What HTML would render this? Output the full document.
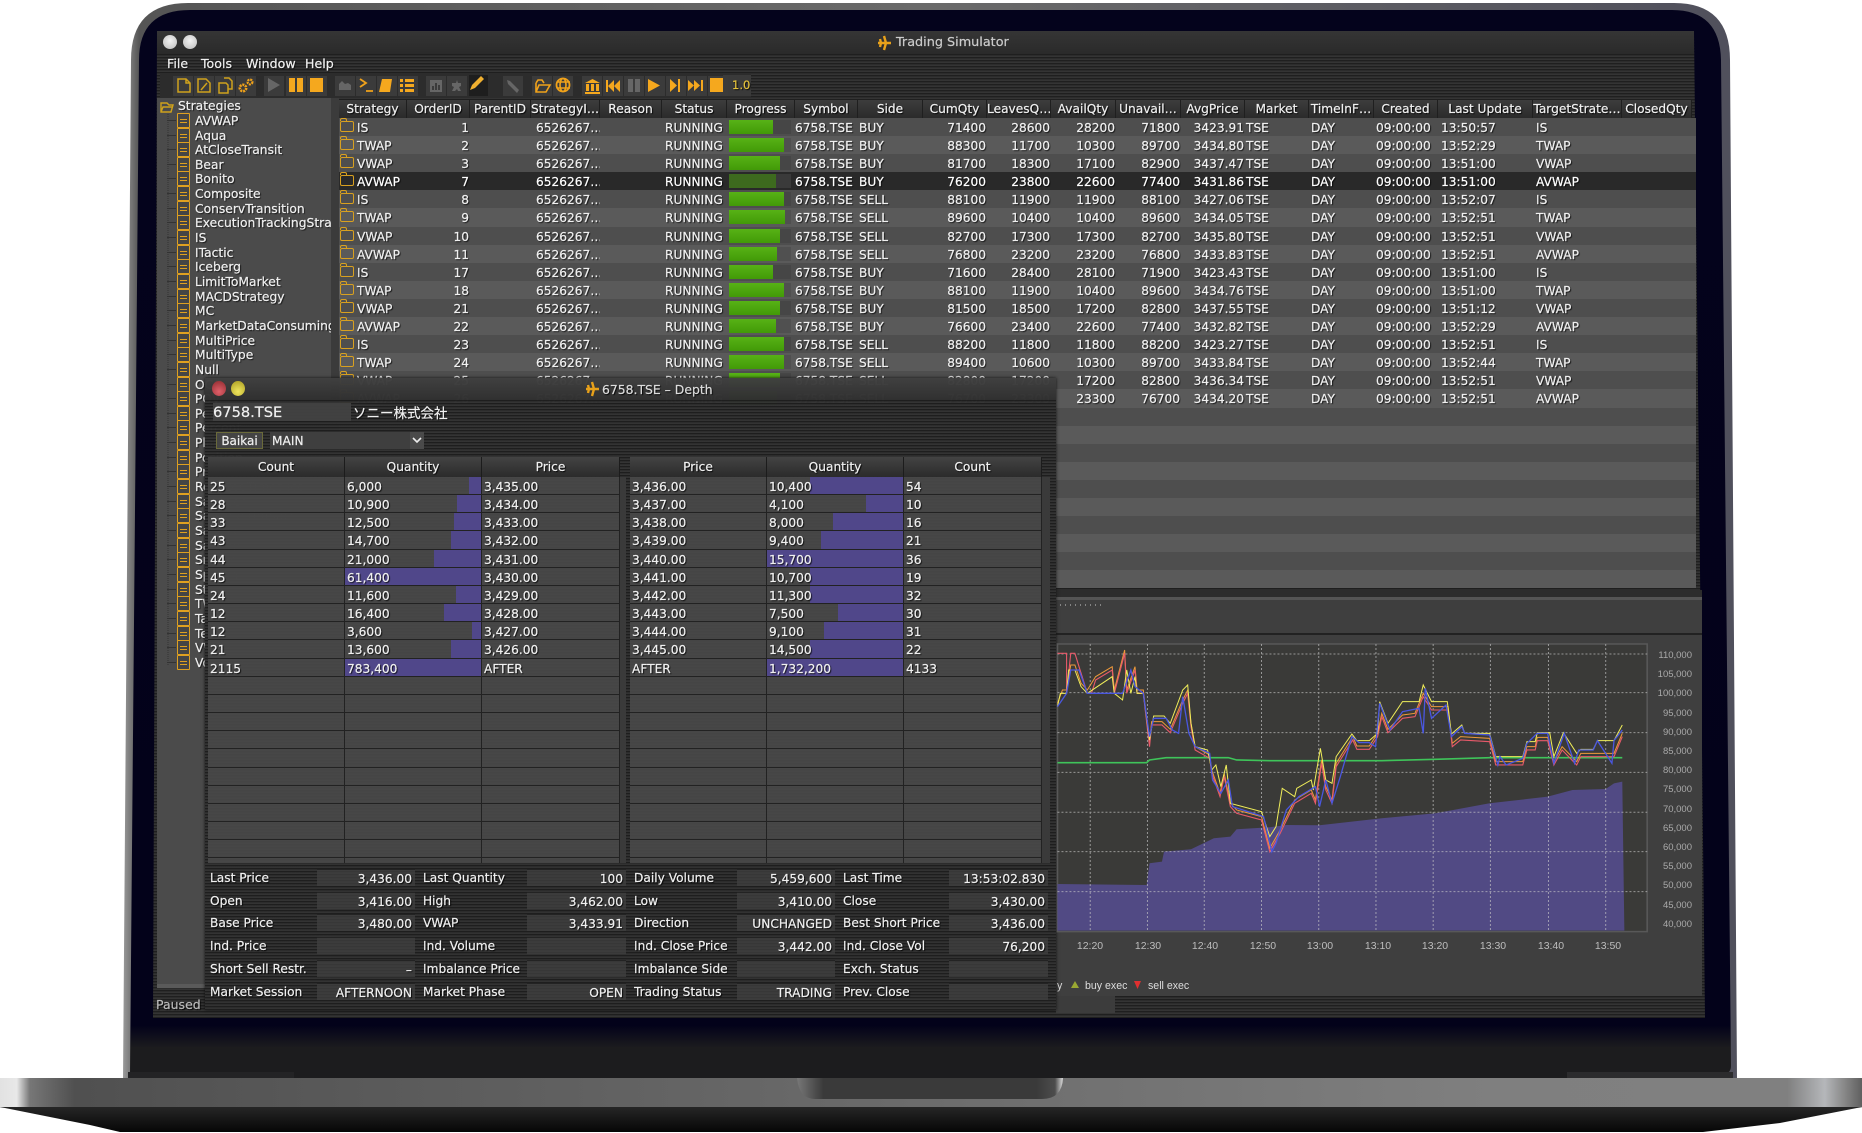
<!DOCTYPE html>
<html lang="en"><head><meta charset="utf-8"><title>Trading Simulator</title>
<style>
html,body{margin:0;padding:0;background:#fff}
body{width:1862px;height:1133px;position:relative;overflow:hidden;font-family:"DejaVu Sans","Noto Sans CJK JP",sans-serif;font-size:12.2px;color:#f0f0f0;-webkit-text-stroke:.2px}
.a{position:absolute}
svg{position:absolute;left:0;top:0}
#scr{position:absolute;left:0;top:0;width:1862px;height:1133px;filter:blur(.35px)}
#bg{position:absolute;left:0;top:0;width:1862px;height:1133px;clip-path:polygon(157px 31px,1694px 31px,1705px 1018px,153px 1018px);background:repeating-linear-gradient(#1f1f1f 0 1px,#2c2c2c 1px 2px,#343434 2px 3px)}
.ts{text-shadow:1px 1px 1px rgba(0,0,0,.75)}
#tree{left:157px;top:98px;width:174px;height:890px;background:#4b4b4b;overflow:hidden;border-bottom:4px solid #5a5a5a;box-sizing:border-box}
#tree div{position:absolute;left:38px;height:15px;line-height:17px;white-space:nowrap;text-shadow:1px 1px 1px rgba(0,0,0,.75);font-size:12.3px}
#tree i{position:absolute;left:-18px;top:0;width:11px;height:13px;border:1.6px solid #dfa020;border-radius:1px;background:linear-gradient(#dfa020,#dfa020) 2px 5px/7px 1px no-repeat,linear-gradient(#dfa020,#dfa020) 2px 8px/7px 1px no-repeat,#454545}
#tree u{position:absolute;left:-28px;top:7px;width:9px;height:1px;background:#333}
#hd{left:339px;top:100px;width:1353px;height:18px;display:grid;grid-template-columns:68px 63px 61px 69px 62px 65px 68px 63px 65px 64px 64px 65px 65px 64px 64px 65px 64px 95px 89px 70px;background:linear-gradient(#3c3c3c,#2a2a2a);overflow:hidden}
#hd span{text-align:center;line-height:18px;white-space:nowrap;overflow:hidden;border-right:1px solid #1f1f1f;box-sizing:border-box;font-size:12.2px;text-shadow:1px 1px 1px #000}
#rows{left:339px;top:118px;width:1357px;height:472px;overflow:hidden}
.r{height:18.1px;line-height:20px;display:grid;grid-template-columns:68px 63px 61px 69px 62px 65px 68px 63px 65px 64px 64px 65px 65px 64px 64px 65px 64px 95px 89px 70px;background:#4e4e4e;text-shadow:1px 1px 1px rgba(0,0,0,.8);position:relative}
.r:nth-child(even){background:#5a5a5a}
.r.s{background:#292929;color:#fff}
.r span{white-space:nowrap;overflow:hidden;position:relative}
.r span:nth-child(1){padding-left:18px}
.r span:nth-child(2),.r span:nth-child(10),.r span:nth-child(11),.r span:nth-child(12),.r span:nth-child(13),.r span:nth-child(14){text-align:right;padding-right:1px}
.r span:nth-child(4){padding-left:5px}
.r span:nth-child(6){padding-left:3px}
.r span:nth-child(9){padding-left:1px}
.r span:nth-child(15){padding-left:1px}
.r span:nth-child(16),.r span:nth-child(17){padding-left:2px}
.r span:nth-child(18),.r span:nth-child(19){padding-left:3px}
.r b{position:absolute;left:1px;top:3px;width:12px;height:9px;border:1.4px solid #d8a020;border-radius:2px}
.r b:before{content:"";position:absolute;left:-1px;top:-4px;width:5px;height:2px;border:1.4px solid #d8a020;border-bottom:0;border-radius:2px 2px 0 0}
.r u{position:absolute;left:2px;top:2px;height:14px;background:linear-gradient(#57b216,#429a08);display:block}
.r.s u{background:#3d6a1e}
.r em{position:absolute;left:2px;top:2px;width:62px;height:14px;background:rgba(0,0,0,.1);display:block}
#chartp{left:1056px;top:610px;width:646px;height:386px;background:#3f3f3f}
#split{left:1056px;top:590px;width:646px;height:20px;background:linear-gradient(#2d2d2d 0 7px,#555 7px 10px,#3e3e3e 10px)}
#xl span{position:absolute;top:940px;font:10.5px "Liberation Sans",sans-serif;color:#bdbdbd;width:40px;text-align:center;-webkit-text-stroke:0}
#yl span{position:absolute;left:1652px;font:9.5px "Liberation Sans",sans-serif;color:#aaa;width:40px;text-align:right;-webkit-text-stroke:0}
.leg{position:absolute;top:980px;font:10.6px "Liberation Sans",sans-serif;color:#ddd;white-space:nowrap;-webkit-text-stroke:0}
#win{left:205px;top:378px;width:851px;height:632px;background:rgba(44,44,44,.9);box-shadow:0 0 3px #111}
#win .tb{position:absolute;left:0;top:0;width:851px;height:22px;background:linear-gradient(rgba(70,70,70,.75),rgba(48,48,48,.85))}
#win .st{position:absolute;left:0;top:22px;width:851px;height:610px;background:repeating-linear-gradient(rgba(28,28,28,.9) 0 1px,rgba(44,44,44,.82) 1px 2px,rgba(52,52,52,.82) 2px 3px)}
.dh{position:absolute;top:79px;height:20px;width:412px;display:grid;grid-template-columns:137px 137px 138px;background:linear-gradient(#434343,#2b2b2b)}
.dh span{text-align:center;line-height:21px;border-right:1px solid #1c1c1c;box-sizing:border-box;text-shadow:1px 1px 1px #000}
.dt{position:absolute;top:99px;width:412px;height:386px;overflow:hidden}
.d{height:18.17px;box-sizing:border-box;border-bottom:1.4px solid #222;display:grid;grid-template-columns:137px 137px 138px;line-height:20px;background:rgba(72,72,72,.94);text-shadow:1px 1px 1px rgba(0,0,0,.85)}
.d span{position:relative;padding-left:2px;border-right:1.4px solid #222;box-sizing:border-box;white-space:nowrap;overflow:hidden}
.d u{position:absolute;right:0;top:0;bottom:0;background:#50478a;z-index:0;display:block}
.d s{position:relative;z-index:1;text-decoration:none}
.ir{position:absolute;left:5px;height:17px;line-height:19px;width:843px;display:grid;grid-template-columns:107px 98px 8px 104px 99px 8px 103px 98px 8px 106px 99px;text-shadow:1px 1px 1px #000}
.ir span{white-space:nowrap;overflow:hidden}
.ir span.v{background:rgba(64,64,64,.75);text-align:right;padding-right:3px;box-sizing:border-box;border-top:1px solid #232323}
</style></head><body>

<svg width="1862" height="1133" viewBox="0 0 1862 1133">
<defs>
<linearGradient id="edge" x1="0" x2="1"><stop offset="0" stop-color="#9a9a9a"/><stop offset=".01" stop-color="#555"/><stop offset=".5" stop-color="#6a6a6a"/><stop offset="1" stop-color="#50505c"/></linearGradient>
<linearGradient id="bez" gradientUnits="userSpaceOnUse" x1="0" y1="0" x2="0" y2="1133"><stop offset="0" stop-color="#04031c"/><stop offset=".905" stop-color="#03021a"/><stop offset=".925" stop-color="#1c1c1e"/><stop offset="1" stop-color="#1c1c1e"/></linearGradient>
<linearGradient id="base" x1="0" x2="1"><stop offset="0" stop-color="#e2e2e2"/><stop offset=".009" stop-color="#e8e8e8"/><stop offset=".016" stop-color="#777"/><stop offset=".04" stop-color="#505050"/><stop offset=".4" stop-color="#666"/><stop offset=".8" stop-color="#7f7f7f"/><stop offset=".96" stop-color="#808080"/><stop offset=".98" stop-color="#b5b7ba"/><stop offset=".99" stop-color="#8a8a8a"/><stop offset="1" stop-color="#5f5f5f"/></linearGradient>
<linearGradient id="bot" x1="0" x2="0" y1="0" y2="1"><stop offset="0" stop-color="#262626"/><stop offset="1" stop-color="#060606"/></linearGradient>
<linearGradient id="nt" x1="0" x2="1"><stop offset="0" stop-color="#777"/><stop offset=".1" stop-color="#3a3a3a"/><stop offset=".9" stop-color="#3a3a3a"/><stop offset=".97" stop-color="#4c4c4c"/><stop offset="1" stop-color="#ddd"/></linearGradient>
</defs>
<path d="M123 1080 L131 60 Q131 3 188 3 H1674 Q1730 3 1730 60 L1737 1080Z" fill="url(#edge)"/>
<path d="M130 1074 L139 60 Q139 10 190 10 H1672 Q1720 10 1721 60 L1731 1066 Q1731 1074 1722 1074Z" fill="url(#bez)"/>
<rect x="128" y="1072" width="166" height="7" fill="#232325"/>
<rect x="1567" y="1072" width="166" height="7" fill="#2b2b2d"/>
<rect x="294" y="1066" width="1273" height="13" fill="#1c1c1e"/>
<rect x="0" y="1078" width="1862" height="29" fill="url(#base)"/>
<rect x="0" y="1107" width="1862" height="1" fill="#9a9a9a" opacity=".35"/>
<path d="M0 1107 H1862 L1780 1123 L1703 1132 H120 L90 1125Z" fill="url(#bot)"/>
<path d="M797 1078 H1063 Q1062 1099 1042 1099 H815 Q799 1099 797 1078Z" fill="url(#nt)"/>
</svg>

<div id="scr">
<div id="bg"></div>
<div class="a" style="left:157px;top:31px;width:1537px;height:23px;background:linear-gradient(#353535,#2a2a2a)"></div>
<div class="a" style="left:163px;top:35px;width:14px;height:14px;border-radius:50%;background:radial-gradient(circle at 50% 40%,#f2f2f2,#bbb)"></div>
<div class="a" style="left:183px;top:35px;width:14px;height:14px;border-radius:50%;background:radial-gradient(circle at 50% 40%,#f2f2f2,#bbb)"></div>
<div class="a" style="left:896px;top:35px;font-size:12.8px;color:#ccc;white-space:nowrap" >Trading Simulator</div>
<svg width="1862" height="1133" style="z-index:1"><path d="M878 43h13M884 36l2 7-2 7M880 39l1 4-1 4" stroke="#e8a11a" stroke-width="2.4" fill="none"/></svg>
<div class="a ts" style="left:167px;top:56px;font-size:12.6px;white-space:nowrap">File</div>
<div class="a ts" style="left:201px;top:56px;font-size:12.6px;white-space:nowrap">Tools</div>
<div class="a ts" style="left:246px;top:56px;font-size:12.6px;white-space:nowrap">Window</div>
<div class="a ts" style="left:305px;top:56px;font-size:12.6px;white-space:nowrap">Help</div>
<div class="a" style="left:160px;top:74px;width:591px;height:23px;background:#2c2c2c"></div>
<div class="a" style="left:723px;top:75px;width:28px;height:21px;background:#3a3a3a"></div>
<div class="a" style="left:732px;top:78px;font-size:11.5px;color:#e4c23c;text-shadow:1px 1px 1px #000">1.0</div>

<svg width="1862" height="1133" style="z-index:1">
<g fill="#3b3b3b">
<rect x="173" y="76" width="20" height="20"/><rect x="194" y="76" width="20" height="20"/><rect x="215" y="76" width="20" height="20"/><rect x="236" y="76" width="20" height="20"/>
<rect x="264" y="76" width="20" height="20"/><rect x="286" y="76" width="20" height="20"/><rect x="307" y="76" width="20" height="20"/>
<rect x="335" y="76" width="20" height="20"/><rect x="356" y="76" width="20" height="20"/><rect x="377" y="76" width="20" height="20"/><rect x="398" y="76" width="20" height="20"/>
<rect x="426" y="76" width="20" height="20"/><rect x="447" y="76" width="20" height="20"/>
<rect x="469" y="75" width="19" height="21" fill="#1e1e1e"/>
<rect x="503" y="76" width="20" height="20"/>
<rect x="532" y="76" width="20" height="20"/><rect x="553" y="76" width="20" height="20"/>
<rect x="582" y="76" width="20" height="20"/><rect x="603" y="76" width="20" height="20"/><rect x="624" y="76" width="20" height="20"/><rect x="645" y="76" width="20" height="20"/><rect x="666" y="76" width="20" height="20"/><rect x="687" y="76" width="20" height="20"/><rect x="708" y="76" width="20" height="20"/>
</g>
<g fill="none" stroke="#cfa21c" stroke-width="1.5">
<path d="M178 79h8l4 4v9h-12zM186 79v4h4"/>
<path d="M198 79h8l4 4v9h-12zM201 90l6-7"/>
<path d="M224 78h5l3 3v8h-4M219 83h7l2 2v8h-9z"/>
</g>
<g fill="none" stroke="#f0a21a" stroke-width="1.6">
<circle cx="243" cy="88" r="3.2" stroke-dasharray="2 .8" stroke-width="2.6"/><circle cx="250" cy="82" r="2.4" stroke-dasharray="2 .8" stroke-width="2.2"/>
<path d="M360 79l6 4-6 4M366 91h7" stroke-width="1.8"/>
<path d="M536 83v9h10l4-7h-11l-3 7M536 83l2-3h4l2 3"/>
<circle cx="563" cy="85" r="6.5" stroke-width="1.8"/><ellipse cx="563" cy="85" rx="3" ry="6.5"/><path d="M557 82h13M557 88h13"/>
</g>
<g fill="#f5a81e">
<rect x="289" y="78" width="6" height="14"/><rect x="297" y="78" width="6" height="14"/>
<rect x="310" y="78" width="13" height="14"/>
<path d="M382 79h10l-2 13h-11zM384 82h6v1h-6z"/>
<rect x="400" y="79" width="3" height="3"/><rect x="400" y="84" width="3" height="3"/><rect x="400" y="89" width="3" height="3"/><rect x="405" y="79" width="9" height="3"/><rect x="405" y="84" width="9" height="3"/><rect x="405" y="89" width="9" height="3"/>
<path d="M470 90l2-5 9-9 3 3-9 9z" fill="#f0b030"/>
<path d="M585 83l7.500-4 7.500 4zM586 84h3v7h-3zM591 84h3v7h-3zM596 84h3v7h-3zM585 92h15v2h-15z"/>
<path d="M606 80h2v12h-2zM614 80v12l-6-6zM620 80v12l-6-6z"/>
<path d="M648 79l12 6.500-12 6.500z"/>
<path d="M670 79l7 6.500-7 6.500zM678 79h2v13h-2z"/>
<path d="M688 80l6 5.500-6 5.500zM694 80l6 5.500-6 5.500zM701 80h2v11h-2z"/>
<rect x="710" y="78" width="13" height="14"/>
</g>
<g fill="#666">
<path d="M268 78l12 7-12 7z"/>
<path d="M339 90v-6l3-3 3 3 3-1 3 2v5z"/>
<path d="M430 80h12v12h-12zM432 90h2v-4h-2zM435 90h2v-7h-2zM438 90h2v-5h-2z" fill-rule="evenodd"/>
<path d="M452 83h4l1-3 1 3h3v3l-2 1 2 4h-3l-1-2-2 2h-3l2-4-2-1z"/>
<path d="M507 80l3 1 9 9-2 3-9-9zM512 79l4 4"/>
<rect x="628" y="79" width="5" height="13"/><rect x="635" y="79" width="5" height="13"/>
</g>
</svg>

<div id="tree" class="a">
<svg width="174" height="890" style="left:0;top:0"><path d="M11 14V568" stroke="#333" stroke-dasharray="1 1" fill="none"/><path d="M4 5h6l2 2h4l-2 7H4z M4 14l2-5h10" stroke="#cfa21c" stroke-width="1.4" fill="none"/></svg>
<div style="left:21px;top:0">Strategies</div>
<div style="top:15px"><u></u><i></i>AVWAP</div>
<div style="top:30px"><u></u><i></i>Aqua</div>
<div style="top:44px"><u></u><i></i>AtCloseTransit</div>
<div style="top:59px"><u></u><i></i>Bear</div>
<div style="top:73px"><u></u><i></i>Bonito</div>
<div style="top:88px"><u></u><i></i>Composite</div>
<div style="top:103px"><u></u><i></i>ConservTransition</div>
<div style="top:117px"><u></u><i></i>ExecutionTrackingStrategy</div>
<div style="top:132px"><u></u><i></i>IS</div>
<div style="top:147px"><u></u><i></i>ITactic</div>
<div style="top:161px"><u></u><i></i>Iceberg</div>
<div style="top:176px"><u></u><i></i>LimitToMarket</div>
<div style="top:191px"><u></u><i></i>MACDStrategy</div>
<div style="top:205px"><u></u><i></i>MC</div>
<div style="top:220px"><u></u><i></i>MarketDataConsuming</div>
<div style="top:235px"><u></u><i></i>MultiPrice</div>
<div style="top:249px"><u></u><i></i>MultiType</div>
<div style="top:264px"><u></u><i></i>Null</div>
<div style="top:279px"><u></u><i></i>OCO</div>
<div style="top:293px"><u></u><i></i>POV</div>
<div style="top:308px"><u></u><i></i>Pegged</div>
<div style="top:322px"><u></u><i></i>Percent</div>
<div style="top:337px"><u></u><i></i>Plan</div>
<div style="top:352px"><u></u><i></i>Position</div>
<div style="top:366px"><u></u><i></i>PriceTransition</div>
<div style="top:381px"><u></u><i></i>RealizedTimeslice</div>
<div style="top:396px"><u></u><i></i>SaOrder</div>
<div style="top:410px"><u></u><i></i>SaMarketImpact</div>
<div style="top:425px"><u></u><i></i>Sample</div>
<div style="top:440px"><u></u><i></i>Savings</div>
<div style="top:454px"><u></u><i></i>Sniper</div>
<div style="top:469px"><u></u><i></i>Spread</div>
<div style="top:484px"><u></u><i></i>Stop</div>
<div style="top:498px"><u></u><i></i>TWAP</div>
<div style="top:513px"><u></u><i></i>Tactic</div>
<div style="top:528px"><u></u><i></i>Test</div>
<div style="top:542px"><u></u><i></i>VWAP</div>
<div style="top:557px"><u></u><i></i>VolumeStar</div>
</div>
<div class="a" style="left:331px;top:98px;width:8px;height:492px;background:#3b3b3b"></div>

<div id="hd" class="a"><span>Strategy</span><span>OrderID</span><span>ParentID</span><span>StrategyI…</span><span>Reason</span><span>Status</span><span>Progress</span><span>Symbol</span><span>Side</span><span>CumQty</span><span>LeavesQ…</span><span>AvailQty</span><span>Unavail…</span><span>AvgPrice</span><span>Market</span><span>TimeInF…</span><span>Created</span><span>Last Update</span><span>TargetStrate…</span><span>ClosedQty</span></div>

<div id="rows" class="a">
<div class="r"><span><b></b>IS</span><span>1</span><span></span><span>6526267…</span><span></span><span>RUNNING</span><span><em></em><u style="width:44px"></u></span><span>6758.TSE</span><span>BUY</span><span>71400</span><span>28600</span><span>28200</span><span>71800</span><span>3423.91</span><span>TSE</span><span>DAY</span><span>09:00:00</span><span>13:50:57</span><span>IS</span><span></span></div>
<div class="r"><span><b></b>TWAP</span><span>2</span><span></span><span>6526267…</span><span></span><span>RUNNING</span><span><em></em><u style="width:55px"></u></span><span>6758.TSE</span><span>BUY</span><span>88300</span><span>11700</span><span>10300</span><span>89700</span><span>3434.80</span><span>TSE</span><span>DAY</span><span>09:00:00</span><span>13:52:29</span><span>TWAP</span><span></span></div>
<div class="r"><span><b></b>VWAP</span><span>3</span><span></span><span>6526267…</span><span></span><span>RUNNING</span><span><em></em><u style="width:51px"></u></span><span>6758.TSE</span><span>BUY</span><span>81700</span><span>18300</span><span>17100</span><span>82900</span><span>3437.47</span><span>TSE</span><span>DAY</span><span>09:00:00</span><span>13:51:00</span><span>VWAP</span><span></span></div>
<div class="r s"><span><b></b>AVWAP</span><span>7</span><span></span><span>6526267…</span><span></span><span>RUNNING</span><span><em style="background:#3a3a3a"></em><u style="width:47px"></u></span><span>6758.TSE</span><span>BUY</span><span>76200</span><span>23800</span><span>22600</span><span>77400</span><span>3431.86</span><span>TSE</span><span>DAY</span><span>09:00:00</span><span>13:51:00</span><span>AVWAP</span><span></span></div>
<div class="r"><span><b></b>IS</span><span>8</span><span></span><span>6526267…</span><span></span><span>RUNNING</span><span><em></em><u style="width:55px"></u></span><span>6758.TSE</span><span>SELL</span><span>88100</span><span>11900</span><span>11900</span><span>88100</span><span>3427.06</span><span>TSE</span><span>DAY</span><span>09:00:00</span><span>13:52:07</span><span>IS</span><span></span></div>
<div class="r"><span><b></b>TWAP</span><span>9</span><span></span><span>6526267…</span><span></span><span>RUNNING</span><span><em></em><u style="width:56px"></u></span><span>6758.TSE</span><span>SELL</span><span>89600</span><span>10400</span><span>10400</span><span>89600</span><span>3434.05</span><span>TSE</span><span>DAY</span><span>09:00:00</span><span>13:52:51</span><span>TWAP</span><span></span></div>
<div class="r"><span><b></b>VWAP</span><span>10</span><span></span><span>6526267…</span><span></span><span>RUNNING</span><span><em></em><u style="width:51px"></u></span><span>6758.TSE</span><span>SELL</span><span>82700</span><span>17300</span><span>17300</span><span>82700</span><span>3435.80</span><span>TSE</span><span>DAY</span><span>09:00:00</span><span>13:52:51</span><span>VWAP</span><span></span></div>
<div class="r"><span><b></b>AVWAP</span><span>11</span><span></span><span>6526267…</span><span></span><span>RUNNING</span><span><em></em><u style="width:48px"></u></span><span>6758.TSE</span><span>SELL</span><span>76800</span><span>23200</span><span>23200</span><span>76800</span><span>3433.83</span><span>TSE</span><span>DAY</span><span>09:00:00</span><span>13:52:51</span><span>AVWAP</span><span></span></div>
<div class="r"><span><b></b>IS</span><span>17</span><span></span><span>6526267…</span><span></span><span>RUNNING</span><span><em></em><u style="width:44px"></u></span><span>6758.TSE</span><span>BUY</span><span>71600</span><span>28400</span><span>28100</span><span>71900</span><span>3423.43</span><span>TSE</span><span>DAY</span><span>09:00:00</span><span>13:51:00</span><span>IS</span><span></span></div>
<div class="r"><span><b></b>TWAP</span><span>18</span><span></span><span>6526267…</span><span></span><span>RUNNING</span><span><em></em><u style="width:55px"></u></span><span>6758.TSE</span><span>BUY</span><span>88100</span><span>11900</span><span>10400</span><span>89600</span><span>3434.76</span><span>TSE</span><span>DAY</span><span>09:00:00</span><span>13:51:00</span><span>TWAP</span><span></span></div>
<div class="r"><span><b></b>VWAP</span><span>21</span><span></span><span>6526267…</span><span></span><span>RUNNING</span><span><em></em><u style="width:51px"></u></span><span>6758.TSE</span><span>BUY</span><span>81500</span><span>18500</span><span>17200</span><span>82800</span><span>3437.55</span><span>TSE</span><span>DAY</span><span>09:00:00</span><span>13:51:12</span><span>VWAP</span><span></span></div>
<div class="r"><span><b></b>AVWAP</span><span>22</span><span></span><span>6526267…</span><span></span><span>RUNNING</span><span><em></em><u style="width:47px"></u></span><span>6758.TSE</span><span>BUY</span><span>76600</span><span>23400</span><span>22600</span><span>77400</span><span>3432.82</span><span>TSE</span><span>DAY</span><span>09:00:00</span><span>13:52:29</span><span>AVWAP</span><span></span></div>
<div class="r"><span><b></b>IS</span><span>23</span><span></span><span>6526267…</span><span></span><span>RUNNING</span><span><em></em><u style="width:55px"></u></span><span>6758.TSE</span><span>SELL</span><span>88200</span><span>11800</span><span>11800</span><span>88200</span><span>3423.27</span><span>TSE</span><span>DAY</span><span>09:00:00</span><span>13:52:51</span><span>IS</span><span></span></div>
<div class="r"><span><b></b>TWAP</span><span>24</span><span></span><span>6526267…</span><span></span><span>RUNNING</span><span><em></em><u style="width:55px"></u></span><span>6758.TSE</span><span>SELL</span><span>89400</span><span>10600</span><span>10300</span><span>89700</span><span>3433.84</span><span>TSE</span><span>DAY</span><span>09:00:00</span><span>13:52:44</span><span>TWAP</span><span></span></div>
<div class="r"><span><b></b>VWAP</span><span>25</span><span></span><span>6526267…</span><span></span><span>RUNNING</span><span><em></em><u style="width:51px"></u></span><span>6758.TSE</span><span>SELL</span><span>82800</span><span>17200</span><span>17200</span><span>82800</span><span>3436.34</span><span>TSE</span><span>DAY</span><span>09:00:00</span><span>13:52:51</span><span>VWAP</span><span></span></div>
<div class="r"><span><b></b>AVWAP</span><span>26</span><span></span><span>6526267…</span><span></span><span>RUNNING</span><span><em></em><u style="width:48px"></u></span><span>6758.TSE</span><span>SELL</span><span>76700</span><span>23300</span><span>23300</span><span>76700</span><span>3434.20</span><span>TSE</span><span>DAY</span><span>09:00:00</span><span>13:52:51</span><span>AVWAP</span><span></span></div>
<div class="r"></div><div class="r"></div><div class="r"></div><div class="r"></div><div class="r"></div><div class="r"></div><div class="r"></div><div class="r"></div><div class="r"></div><div class="r"></div>
</div>

<div id="split" class="a"></div>
<div id="chartp" class="a"></div>
<div class="a" style="left:1056px;top:633px;width:646px;height:2px;background:#222"></div>

<svg width="1862" height="1133" style="z-index:1">
<path d="M1060 605h44" stroke="#ccc" stroke-width="1" stroke-dasharray="1 4"/>
<g transform="translate(1050,590) scale(.4147,.3333)" fill="none">
<rect x="18" y="162" width="1422" height="863" fill="#3a3a38" stroke="#585858" stroke-width="1.6" vector-effect="non-scaling-stroke"/>
<path d="M18 882L233 885L240 820L270 815L275 785L340 778L395 745L435 740L450 718L530 712L570 705L650 706L800 685L930 670L1060 640L1200 620L1260 600L1340 597L1360 580L1380 575L1385 1022L18 1022Z" fill="#514a84"/>
<g stroke="#c9c9c9" stroke-dasharray="2 2" stroke-width="1" opacity=".65">
<path vector-effect="non-scaling-stroke" d="M97 162V1025M235 162V1025M372 162V1025M510 162V1025M648 162V1025M786 162V1025M924 162V1025M1062 162V1025M1202 162V1025M1340 162V1025"/>
<path vector-effect="non-scaling-stroke" d="M18 192H1440M18 308H1440M18 428H1440M18 547H1440M18 667H1440M18 785H1440M18 905H1440"/>
</g>
<path vector-effect="non-scaling-stroke" stroke="#3fc45a" stroke-width="1.6" d="M18 518L233 518L240 510L280 503L430 503L450 510L530 512L800 512L930 508L1060 503L1380 503"/>
<path vector-effect="non-scaling-stroke" stroke="#ef9a3a" stroke-width="1" d="M18 340L30 300L40 300L50 225L60 225L75 280L90 300L110 260L150 230L155 300L180 180L185 300L205 230L210 300L225 300L240 460L245 395L270 395L290 418L320 330L332 300L340 400L350 470L385 495L390 540L410 610L420 550L435 640L450 660L510 680L530 775L555 720L590 630L630 600L640 630L655 510L665 590L680 630L690 520L730 440L740 468L770 468L790 430L800 370L815 418L850 375L880 370L900 310L920 350L960 350L970 460L990 440L1060 445L1075 515L1140 515L1150 470L1170 470L1175 442L1200 442L1215 515L1235 470L1270 515L1280 490L1340 490L1360 490L1380 430"/>
<path vector-effect="non-scaling-stroke" stroke="#e85a6a" stroke-width="1.1" d="M18 190L40 190L40 310L50 190L60 190L75 250L90 310L100 310L110 270L150 240L155 310L180 190L185 310L205 240L210 310L225 310L240 470L245 405L270 405L290 428L320 340L332 310L340 410L350 480L385 505L390 550L410 620L420 560L435 650L450 670L510 690L530 785L555 730L590 640L630 610L640 640L655 520L665 600L680 640L690 530L730 450L740 478L770 478L790 440L800 380L815 428L850 385L880 380L900 320L920 360L960 360L970 470L990 450L1060 455L1075 525L1140 525L1150 480L1170 480L1175 452L1200 452L1215 525L1235 480L1270 525L1280 500L1340 500L1360 500L1380 440"/>
<path vector-effect="non-scaling-stroke" stroke="#f0ee5a" stroke-width="1" d="M18 350L25 310L40 310L45 240L60 240L75 290L90 310L150 260L155 310L175 330L185 240L195 310L205 260L210 310L225 310L240 450L250 378L275 378L290 400L320 300L332 285L340 400L350 470L380 480L390 540L400 525L412 590L425 525L435 640L510 665L530 740L545 710L560 595L590 620L595 595L630 570L635 600L652 475L665 570L680 580L690 500L728 432L740 452L770 452L790 430L795 335L815 400L850 335L890 335L900 285L920 335L958 335L968 432L993 405L1000 430L1060 430L1075 500L1140 500L1150 455L1170 455L1175 428L1205 428L1215 500L1238 428L1270 490L1280 478L1310 478L1320 452L1360 452L1380 405"/>
<path vector-effect="non-scaling-stroke" stroke="#4a57e0" stroke-width="1.3" d="M18 350L40 310L50 240L70 240L90 310L150 310L175 310L195 240L205 290L225 310L240 440L250 385L280 385L295 420L310 430L320 320L335 430L350 470L385 490L392 570L412 610L430 570L440 650L515 680L535 785L545 760L570 660L600 620L640 590L650 650L665 570L680 640L700 560L728 440L745 458L770 458L785 470L795 340L820 420L850 365L890 355L900 430L905 295L920 385L955 345L968 440L993 410L1000 430L1060 435L1080 525L1085 500L1100 525L1140 505L1150 460L1175 430L1200 430L1215 520L1240 430L1265 520L1275 480L1310 480L1320 452L1355 520L1360 452L1380 420"/>
</g>
<path d="M1071 988l4-7 4 7z" fill="#9aa832"/><path d="M1134 981h7l-3.500 8z" fill="#e03030"/>
</svg>

<div id="xl">
<span style="left:1070px">12:20</span><span style="left:1128px">12:30</span><span style="left:1185px">12:40</span><span style="left:1243px">12:50</span><span style="left:1300px">13:00</span><span style="left:1358px">13:10</span><span style="left:1415px">13:20</span><span style="left:1473px">13:30</span><span style="left:1531px">13:40</span><span style="left:1588px">13:50</span>
</div>
<div id="yl">
<span style="top:650px">110,000</span><span style="top:669px">105,000</span><span style="top:688px">100,000</span><span style="top:708px">95,000</span><span style="top:727px">90,000</span><span style="top:746px">85,000</span><span style="top:765px">80,000</span><span style="top:784px">75,000</span><span style="top:804px">70,000</span><span style="top:823px">65,000</span><span style="top:842px">60,000</span><span style="top:861px">55,000</span><span style="top:880px">50,000</span><span style="top:900px">45,000</span><span style="top:919px">40,000</span>
</div>
<div class="leg" style="left:1057px">y</div>
<div class="leg" style="left:1085px">buy exec</div>
<div class="leg" style="left:1148px">sell exec</div>
<div class="a" style="left:1056px;top:996px;width:59px;height:17px;background:#3c3c3c"></div>
<div class="a" style="left:156px;top:997px;font-size:12.5px;color:#bbb;text-shadow:1px 1px 1px #000">Paused</div>

<div id="win" class="a">
<div class="st"></div>
<div class="tb"></div>
<div class="a" style="left:7px;top:3px;width:14px;height:15px;border-radius:50%;background:radial-gradient(circle at 50% 70%,#e0606a,#8e2a2e)"></div>
<div class="a" style="left:26px;top:3px;width:14px;height:15px;border-radius:50%;background:radial-gradient(circle at 50% 70%,#efe55e,#a89a20)"></div>
<svg width="20" height="16" style="left:380px;top:3px"><path d="M1 8h13M7 1l2 7-2 7M3 4l1 4-1 4" stroke="#e8a11a" stroke-width="2.400" fill="none"/></svg>
<div class="a" style="left:397px;top:4px;font-size:12.4px;color:#ddd;white-space:nowrap;text-shadow:1px 1px 1px #000">6758.TSE – Depth</div>
<div class="a" style="left:8px;top:25px;width:138px;height:18px;background:rgba(66,66,66,.95);font-size:14.6px;line-height:20px;white-space:nowrap" >6758.TSE</div>
<div class="a ts" style="left:148px;top:24px;font-size:13.5px;line-height:20px;white-space:nowrap;font-family:'Noto Sans CJK JP',sans-serif">ソニー株式会社</div>
<div class="a" style="left:11px;top:54px;width:47px;height:17px;border:1px solid #6a6a3a;box-sizing:border-box;background:#444;text-align:center;line-height:17px;font-size:12px">Baikai</div>
<div class="a" style="left:65px;top:54px;width:140px;height:17px;background:#3f3f3f;line-height:18px;font-size:12.2px;padding-left:2px;box-sizing:border-box">MAIN</div>
<div class="a" style="left:205px;top:54px;width:14px;height:17px;background:#4a4a4a"><svg width="14" height="17"><path d="M3 6l4 4 4-4" stroke="#eee" stroke-width="1.6" fill="none"/></svg></div>

<div class="dh" style="left:3px"><span>Count</span><span>Quantity</span><span>Price</span></div>
<div class="dt" style="left:3px">
<div class="d"><span>25</span><span><u style="width:12px"></u><s>6,000</s></span><span>3,435.00</span></div>
<div class="d"><span>28</span><span><u style="width:24px"></u><s>10,900</s></span><span>3,434.00</span></div>
<div class="d"><span>33</span><span><u style="width:27px"></u><s>12,500</s></span><span>3,433.00</span></div>
<div class="d"><span>43</span><span><u style="width:30px"></u><s>14,700</s></span><span>3,432.00</span></div>
<div class="d"><span>44</span><span><u style="width:47px"></u><s>21,000</s></span><span>3,431.00</span></div>
<div class="d"><span>45</span><span><u style="width:137px"></u><s>61,400</s></span><span>3,430.00</span></div>
<div class="d"><span>24</span><span><u style="width:25px"></u><s>11,600</s></span><span>3,429.00</span></div>
<div class="d"><span>12</span><span><u style="width:37px"></u><s>16,400</s></span><span>3,428.00</span></div>
<div class="d"><span>12</span><span><u style="width:9px"></u><s>3,600</s></span><span>3,427.00</span></div>
<div class="d"><span>21</span><span><u style="width:30px"></u><s>13,600</s></span><span>3,426.00</span></div>
<div class="d"><span>2115</span><span><u style="width:137px"></u><s>783,400</s></span><span>AFTER</span></div>
<div class="d"><span></span><span></span><span></span></div><div class="d"><span></span><span></span><span></span></div><div class="d"><span></span><span></span><span></span></div><div class="d"><span></span><span></span><span></span></div><div class="d"><span></span><span></span><span></span></div><div class="d"><span></span><span></span><span></span></div><div class="d"><span></span><span></span><span></span></div><div class="d"><span></span><span></span><span></span></div><div class="d"><span></span><span></span><span></span></div><div class="d"><span></span><span></span><span></span></div><div class="d"><span></span><span></span><span></span></div>
</div>
<div class="a" style="left:415px;top:99px;width:6px;height:386px;background:#3a3a3a"></div>

<div class="dh" style="left:425px"><span>Price</span><span>Quantity</span><span>Count</span></div>
<div class="dt" style="left:425px">
<div class="d"><span>3,436.00</span><span><u style="width:93px"></u><s>10,400</s></span><span>54</span></div>
<div class="d"><span>3,437.00</span><span><u style="width:37px"></u><s>4,100</s></span><span>10</span></div>
<div class="d"><span>3,438.00</span><span><u style="width:70px"></u><s>8,000</s></span><span>16</span></div>
<div class="d"><span>3,439.00</span><span><u style="width:82px"></u><s>9,400</s></span><span>21</span></div>
<div class="d"><span>3,440.00</span><span><u style="width:137px"></u><s>15,700</s></span><span>36</span></div>
<div class="d"><span>3,441.00</span><span><u style="width:93px"></u><s>10,700</s></span><span>19</span></div>
<div class="d"><span>3,442.00</span><span><u style="width:93px"></u><s>11,300</s></span><span>32</span></div>
<div class="d"><span>3,443.00</span><span><u style="width:65px"></u><s>7,500</s></span><span>30</span></div>
<div class="d"><span>3,444.00</span><span><u style="width:79px"></u><s>9,100</s></span><span>31</span></div>
<div class="d"><span>3,445.00</span><span><u style="width:93px"></u><s>14,500</s></span><span>22</span></div>
<div class="d"><span>AFTER</span><span><u style="width:137px"></u><s>1,732,200</s></span><span>4133</span></div>
<div class="d"><span></span><span></span><span></span></div><div class="d"><span></span><span></span><span></span></div><div class="d"><span></span><span></span><span></span></div><div class="d"><span></span><span></span><span></span></div><div class="d"><span></span><span></span><span></span></div><div class="d"><span></span><span></span><span></span></div><div class="d"><span></span><span></span><span></span></div><div class="d"><span></span><span></span><span></span></div><div class="d"><span></span><span></span><span></span></div><div class="d"><span></span><span></span><span></span></div><div class="d"><span></span><span></span><span></span></div>
</div>
<div class="a" style="left:837px;top:99px;width:8px;height:386px;background:#3a3a3a"></div>

<div class="ir" style="top:491px"><span>Last Price</span><span class="v">3,436.00</span><i></i><span>Last Quantity</span><span class="v">100</span><i></i><span>Daily Volume</span><span class="v">5,459,600</span><i></i><span>Last Time</span><span class="v">13:53:02.830</span></div>
<div class="ir" style="top:513.700px"><span>Open</span><span class="v">3,416.00</span><i></i><span>High</span><span class="v">3,462.00</span><i></i><span>Low</span><span class="v">3,410.00</span><i></i><span>Close</span><span class="v">3,430.00</span></div>
<div class="ir" style="top:536.400px"><span>Base Price</span><span class="v">3,480.00</span><i></i><span>VWAP</span><span class="v">3,433.91</span><i></i><span>Direction</span><span class="v">UNCHANGED</span><i></i><span>Best Short Price</span><span class="v">3,436.00</span></div>
<div class="ir" style="top:559.100px"><span>Ind. Price</span><span class="v"></span><i></i><span>Ind. Volume</span><span class="v"></span><i></i><span>Ind. Close Price</span><span class="v">3,442.00</span><i></i><span>Ind. Close Vol</span><span class="v">76,200</span></div>
<div class="ir" style="top:581.800px"><span>Short Sell Restr.</span><span class="v">–</span><i></i><span>Imbalance Price</span><span class="v"></span><i></i><span>Imbalance Side</span><span class="v"></span><i></i><span>Exch. Status</span><span class="v"></span></div>
<div class="ir" style="top:604.500px"><span>Market Session</span><span class="v">AFTERNOON</span><i></i><span>Market Phase</span><span class="v">OPEN</span><i></i><span>Trading Status</span><span class="v">TRADING</span><i></i><span>Prev. Close</span><span class="v"></span></div>
</div>
</div>
</body></html>
